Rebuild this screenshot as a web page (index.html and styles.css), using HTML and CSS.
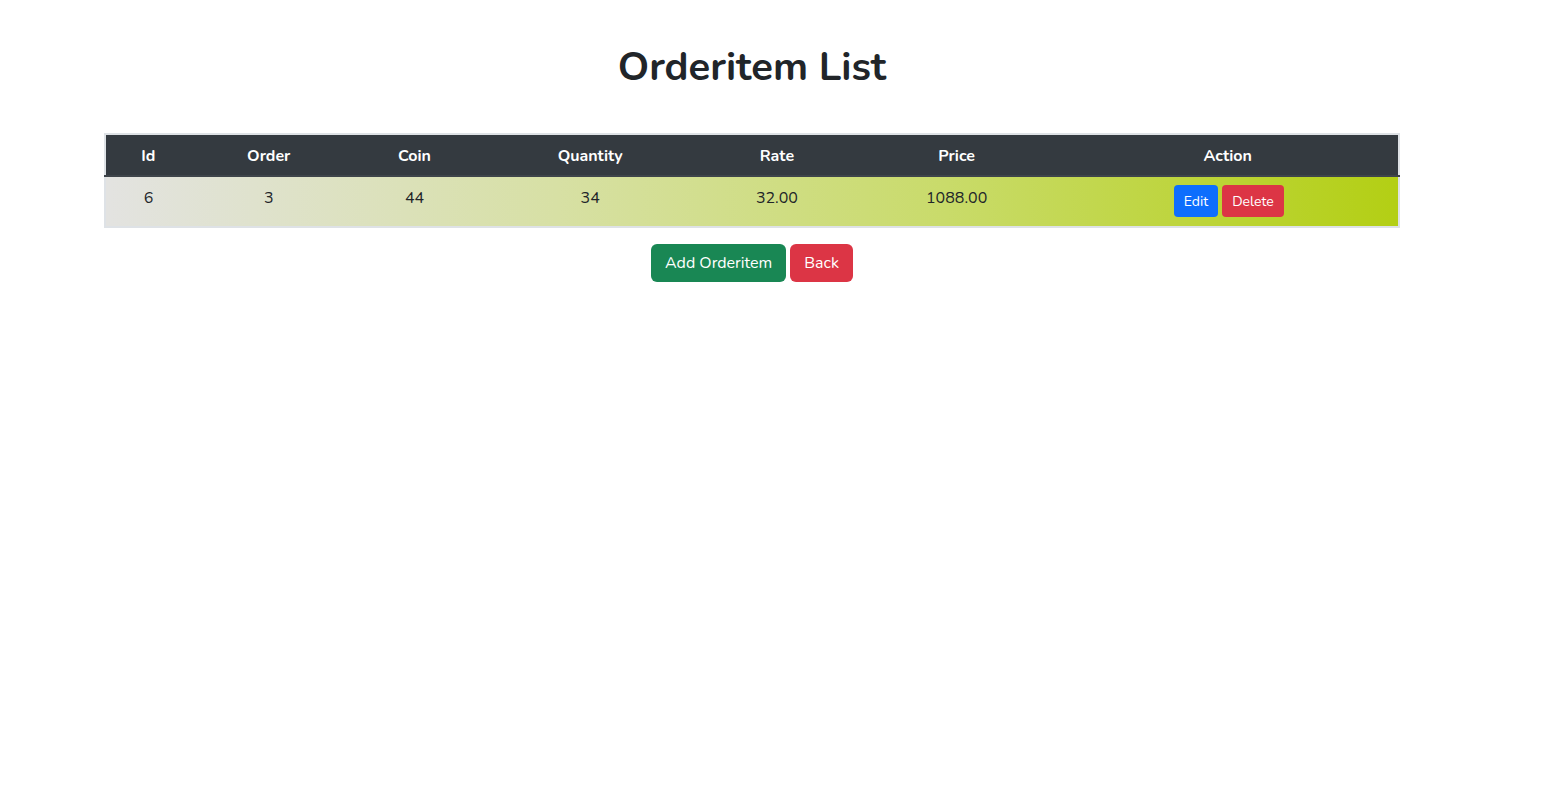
FILE: index.html
```html
<!DOCTYPE html>
<html lang="en">
<head>
<meta charset="utf-8">
<title>Orderitem List</title>
<link rel="stylesheet" href="styles.css">
</head>
<body>
<div class="page">
  <h1 class="title">Orderitem List</h1>
  <table class="items">
    <colgroup>
      <col class="c-id"><col class="c-order"><col class="c-coin"><col class="c-qty"><col class="c-rate"><col class="c-price"><col class="c-action">
    </colgroup>
    <thead>
      <tr>
        <th>Id</th><th>Order</th><th>Coin</th><th>Quantity</th><th>Rate</th><th>Price</th><th>Action</th>
      </tr>
    </thead>
    <tbody>
      <tr>
        <td>6</td><td>3</td><td>44</td><td>34</td><td>32.00</td><td>1088.00</td>
        <td><span class="actions"><a class="btn btn-sm btn-primary">Edit</a><a class="btn btn-sm btn-danger">Delete</a></span></td>
      </tr>
    </tbody>
  </table>
  <div class="footer-actions">
    <a class="btn btn-success">Add Orderitem</a>
    <a class="btn btn-danger">Back</a>
  </div>
</div>
</body>
</html>
```
FILE: styles.css
```css
html, body {
  margin: 0;
  padding: 0;
  background: #fff;
}
body {
  font-family: "Nunito", "Mulish", "Lato", "Noto Sans", sans-serif;
  font-size: 16px;
  line-height: 1.5;
  color: #212529;
}
.page {
  width: 1296px;
  margin-left: 104px;
  padding-top: 43px;
}
.title {
  margin: 0 0 42px;
  text-align: center;
  font-size: 40px;
  line-height: 1.2;
  font-weight: 700;
  color: #212529;
}
.items {
  width: 1296px;
  border-collapse: collapse;
  border: 2px solid #dee2e6;
  text-align: center;
}
.c-id { width: 86px; }
.c-order { width: 156px; }
.c-coin { width: 136px; }
.c-qty { width: 216px; }
.c-rate { width: 158px; }
.c-price { width: 202px; }
.c-action { width: 342px; }
.items th {
  background: #343a40;
  color: #fff;
  font-weight: 700;
  padding: 9px 8px 7px;
  height: 24px;
}
.items tbody tr {
  background: linear-gradient(to right, #e3e3e1 0%, #d7e0a4 35%, #c9db6a 65%, #b3cf14 100%);
  border-top: 2px solid #3e444a;
}
.items td {
  padding: 9px 8px 9px;
  vertical-align: top;
  color: #212529;
}
.actions {
  display: inline-flex;
  gap: 4px;
  margin-left: 2px;
  margin-top: -1px;
  vertical-align: top;
}
.btn {
  display: inline-block;
  box-sizing: border-box;
  height: 38px;
  border-radius: 6px;
  color: #fff;
  font-size: 16px;
  line-height: 24px;
  padding: 7px 14px;
  cursor: pointer;
}
.btn-sm {
  height: 32px;
  font-size: 14px;
  line-height: 21px;
  padding: 5.5px 10px;
  border-radius: 4px;
}
.btn-primary { background: #0d6efd; }
.btn-danger { background: #dc3545; }
.btn-success { background: #198754; }
.footer-actions {
  display: flex;
  justify-content: center;
  gap: 4px;
  margin-top: 16px;
}
```
